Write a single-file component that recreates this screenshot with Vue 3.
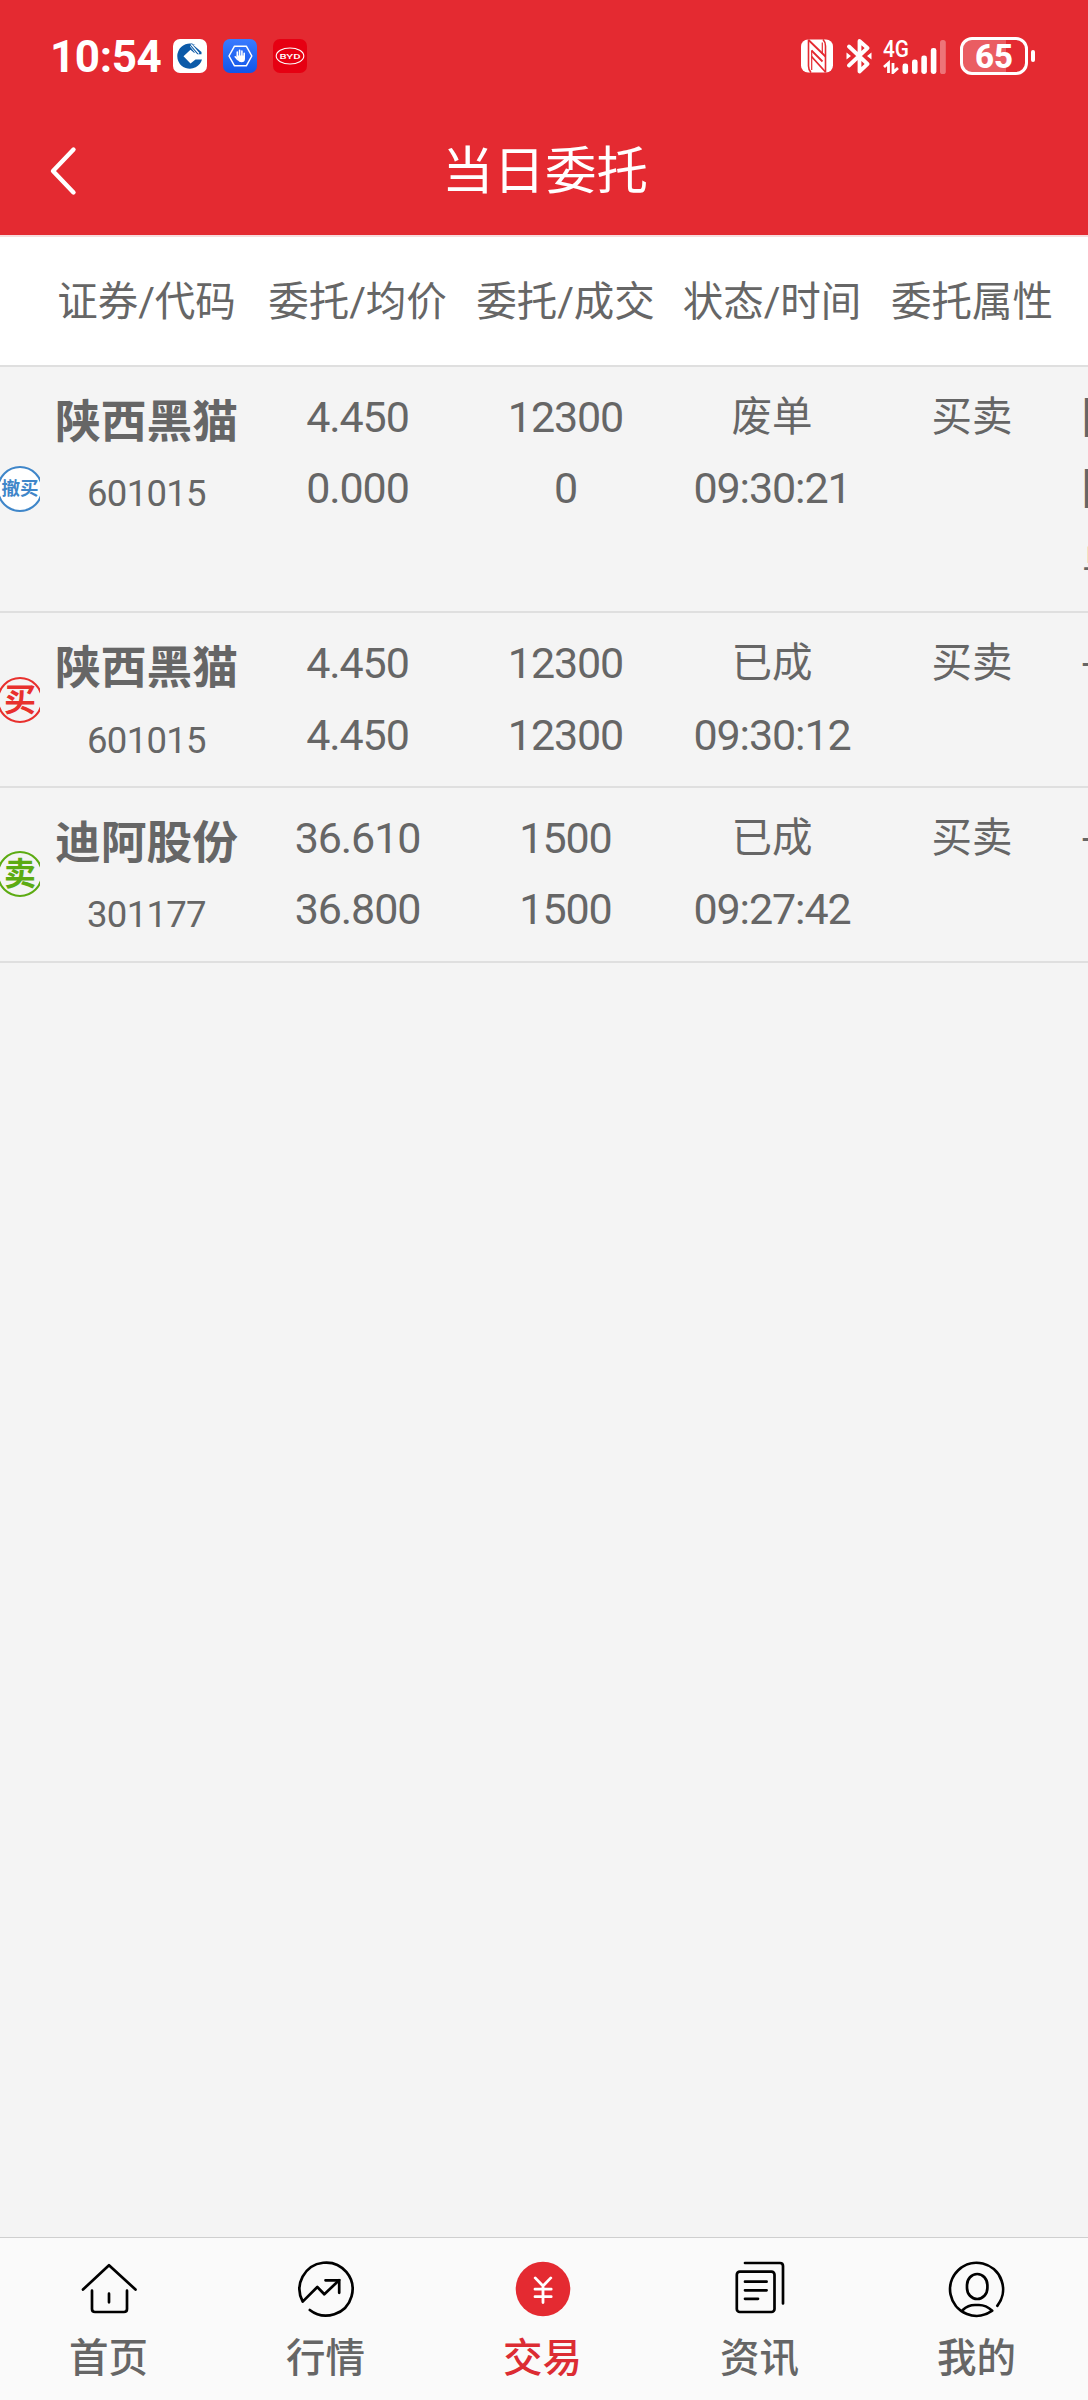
<script setup>
import { ref } from 'vue'

const columns = ['证券/代码', '委托/均价', '委托/成交', '状态/时间', '委托属性']

const orders = ref([
  {
    badge: '撤买',
    type: 'cancel',
    name: '陕西黑猫',
    code: '601015',
    price: '4.450',
    avg: '0.000',
    amount: '12300',
    dealt: '0',
    status: '废单',
    time: '09:30:21',
    attr: '买卖',
    note: ['[', '[', '单'],
  },
  {
    badge: '买',
    type: 'buy',
    name: '陕西黑猫',
    code: '601015',
    price: '4.450',
    avg: '4.450',
    amount: '12300',
    dealt: '12300',
    status: '已成',
    time: '09:30:12',
    attr: '买卖',
    note: ['--'],
  },
  {
    badge: '卖',
    type: 'sell',
    name: '迪阿股份',
    code: '301177',
    price: '36.610',
    avg: '36.800',
    amount: '1500',
    dealt: '1500',
    status: '已成',
    time: '09:27:42',
    attr: '买卖',
    note: ['--'],
  },
])

const tabs = [
  { key: 'home', label: '首页' },
  { key: 'market', label: '行情' },
  { key: 'trade', label: '交易' },
  { key: 'news', label: '资讯' },
  { key: 'mine', label: '我的' },
]
const activeTab = ref('trade')
</script>

<template>
  <div class="page">
    <header class="top">
      <div class="status-bar">
        <div class="status-left">
          <span class="clock">10:54</span>
          <svg class="app-icon" width="34" height="34" viewBox="0 0 34 34">
            <rect width="34" height="34" rx="7" fill="#fff" />
            <path d="M22.5 5.8A12.6 12.6 0 1 0 29 20.6H22.5L17.5 24.6 10.5 17.3 17.5 10.8 21 13.8H22L17 7.6V5.2z" fill="#0c5aa8" />
            <path d="M18.5 4.5L28.5 13V15.4H24.5L16.5 6z" fill="#0c5aa8" />
            <path d="M18.2 5.5L26 14.5M21 16.2H30" stroke="#fff" stroke-width="1.2" />
            <path d="M17.5 11.5l6 6-6 6-6-6z" fill="#fff" />
          </svg>
          <svg class="app-icon" width="34" height="34" viewBox="0 0 34 34">
            <defs>
              <linearGradient id="guard" x1="0" y1="0" x2="0" y2="1">
                <stop offset="0" stop-color="#3a7bff" />
                <stop offset="1" stop-color="#1155e8" />
              </linearGradient>
            </defs>
            <rect width="34" height="34" rx="7" fill="url(#guard)" />
            <path d="M11.5 7.2h11.8L28.8 17l-5.5 9.8H11.5L6 17z" fill="none" stroke="#fff" stroke-width="1.5" stroke-linejoin="round" />
            <path d="M14.3 18v-5M16.6 17v-5.6M18.9 17v-5M21.2 18v-3.8M14.6 20.5L12.2 17.8" stroke="#fff" stroke-width="1.6" stroke-linecap="round" />
            <path d="M13.6 16.5h8.4v3.2q0 3.6-3.6 3.6-2.4 0-3.6-2z" fill="#fff" />
          </svg>
          <svg class="app-icon" width="34" height="34" viewBox="0 0 34 34">
            <rect width="34" height="34" rx="7" fill="#e60012" />
            <ellipse cx="17" cy="17" rx="13.8" ry="8" fill="none" stroke="#fff" stroke-width="1.1" />
            <text x="17" y="19.8" class="logo-text" text-anchor="middle" textLength="21" lengthAdjust="spacingAndGlyphs">BYD</text>
          </svg>
        </div>

        <div class="status-right">
          <svg class="nfc" width="32" height="34" viewBox="0 0 32 34">
            <rect y="0.5" width="32" height="33" rx="7" fill="#fff" />
            <path d="M7.5 0.5V27Q7.5 31 10 33.5M24.5 33.5V7Q24.5 3 22 0.5" fill="none" stroke="#e42a31" stroke-width="1.6" />
            <path d="M7.5 1L24.5 17.5M10.5 11.5L21.5 22.5M10.5 17.5L24.5 33" fill="none" stroke="#e42a31" stroke-width="1.8" />
            <path d="M10.7 11.5V31M21.3 3.5V15" fill="none" stroke="#e42a31" stroke-width="1.2" />
          </svg>
          <svg class="bluetooth" width="26" height="36" viewBox="0 0 26 36">
            <path d="M3 8.5L21.5 26 13.5 33.5V3L21.5 10 3 27.5" fill="none" stroke="#fff" stroke-width="3.8" stroke-linejoin="round" stroke-linecap="round" />
            <path d="M0.5 14.5L5 18 0.5 21.5zM25.5 14.5L21 18 25.5 21.5z" fill="#fff" />
          </svg>
          <svg class="signal" width="64" height="36" viewBox="0 0 64 36">
            <text x="0" y="18.5" class="net-text" textLength="26" lengthAdjust="spacingAndGlyphs">4G</text>
            <path d="M1 29L5.5 25V35M10 25V34.5L15 30" fill="none" stroke="#fff" stroke-width="2.8" />
            <rect x="19.5" y="25.5" width="5.6" height="10.5" rx="2.4" fill="#fff" />
            <rect x="29" y="21.5" width="5.6" height="14.5" rx="2.4" fill="#fff" />
            <rect x="38.3" y="17.5" width="5.6" height="18.5" rx="2.4" fill="#fff" />
            <rect x="47.8" y="10" width="5.6" height="26" rx="2.4" fill="#fff" />
            <rect x="57" y="2" width="5.8" height="34" rx="2.6" fill="#fff" opacity="0.35" />
          </svg>
          <div class="battery">
            <span class="battery-text">65</span>
          </div>
          <span class="battery-cap"></span>
        </div>
      </div>

      <div class="nav-bar">
        <button class="back" aria-label="返回">
          <svg width="32" height="50" viewBox="0 0 32 50">
            <path d="M27.5 3.5L7 25 27.5 46.5" fill="none" stroke="#fff" stroke-width="4.4" stroke-linecap="round" stroke-linejoin="round" />
          </svg>
        </button>
        <h1>当日委托</h1>
      </div>
    </header>

    <main class="content">
      <div class="grid table-head">
        <span class="side"></span>
        <span v-for="col in columns" :key="col" class="cell">{{ col }}</span>
      </div>

      <div v-for="(order, i) in orders" :key="i" class="grid row">
        <div class="side">
          <span class="badge" :class="order.type">{{ order.badge }}</span>
        </div>
        <div class="cell stock">
          <strong>{{ order.name }}</strong>
          <span class="code">{{ order.code }}</span>
        </div>
        <div class="cell num">
          <span>{{ order.price }}</span>
          <span>{{ order.avg }}</span>
        </div>
        <div class="cell num">
          <span>{{ order.amount }}</span>
          <span>{{ order.dealt }}</span>
        </div>
        <div class="cell">
          <span>{{ order.status }}</span>
          <span class="num">{{ order.time }}</span>
        </div>
        <div class="cell">
          <span>{{ order.attr }}</span>
        </div>
        <div class="cell note">
          <span v-for="(line, n) in order.note" :key="n">{{ line }}</span>
        </div>
      </div>
    </main>

    <nav class="tab-bar">
      <button
        v-for="tab in tabs"
        :key="tab.key"
        class="tab"
        :class="{ active: tab.key === activeTab }"
        @click="activeTab = tab.key"
      >
        <svg class="tab-icon" width="60" height="60" viewBox="0 0 60 60">
          <template v-if="tab.key === 'home'">
            <path d="M4 30.5L30 6.2 56.5 30.5" />
            <path d="M13 31.7V50q0 3 3 3h29q3 0 3-3V31.7M30 34.7v8.6" />
          </template>
          <template v-else-if="tab.key === 'market'">
            <path d="M13.8 51A26.5 26.5 0 1 0 6.7 42.6L21.3 28 28.3 35.3 43 21.3" />
            <path d="M29.5 21.3H43.2V33.8" stroke-linejoin="miter" />
          </template>
          <template v-else-if="tab.key === 'trade'">
            <circle cx="30" cy="30" r="27.3" class="coin" />
            <path class="yen" d="M22.2 18.9L30 27 37.8 18.9M30 27V43.5M22 30.2H38.2M22 37.7H38.2" />
          </template>
          <template v-else-if="tab.key === 'news'">
            <rect x="6.8" y="12.7" width="37.7" height="40.3" rx="3" />
            <path d="M15 22.7H36.6M15 31.3H36.6M15 39.8H28" />
            <path d="M15 4H50q3 0 3 3V44.5" />
          </template>
          <template v-else>
            <path d="M50.3 46.8A26.5 26.5 0 1 0 45.2 51.7Q39 46 32 46H28Q21 46 15.8 51" />
            <rect x="20" y="15" width="20.4" height="25" rx="10.2" ry="11" />
          </template>
        </svg>
        <span class="tab-label">{{ tab.label }}</span>
      </button>
    </nav>
  </div>
</template>

<style>
body {
  background: #f4f4f4;
}
</style>

<style scoped>
.page {
  display: flex;
  flex-direction: column;
  width: 1088px;
  height: 2400px;
  overflow: hidden;
  background: #f4f4f4;
  color: #666;
  font-family: Roboto, "Noto Sans CJK SC", sans-serif;
}

.top {
  height: 235px;
  background: #e42a31;
  color: #fff;
}

.status-bar {
  display: flex;
  align-items: center;
  justify-content: space-between;
  height: 112px;
  padding: 0 53px 0 50px;
}

.status-left,
.status-right {
  display: flex;
  align-items: center;
}

.clock {
  width: 123px;
  font-size: 44px;
  font-weight: 700;
  letter-spacing: -0.4px;
  line-height: 50px;
  padding-top: 2px;
}

.app-icon {
  margin-right: 16px;
}

.logo-text {
  font-size: 8px;
  font-weight: 500;
  fill: #fff;
}

.net-text {
  font-size: 23px;
  font-weight: 500;
  fill: #fff;
}

.nfc {
  margin-right: 13px;
}

.bluetooth {
  margin-right: 11px;
}

.signal {
  margin-right: 13px;
}

.battery {
  display: flex;
  align-items: center;
  justify-content: center;
  box-sizing: border-box;
  width: 68px;
  height: 38px;
  border: 3px solid #fff;
  border-radius: 12px;
  background: linear-gradient(to right, rgba(255, 255, 255, 0.24) 70%, transparent 70%);
}

.battery-text {
  font-size: 33px;
  font-weight: 800;
  line-height: 34px;
  padding-top: 1px;
}

.battery-cap {
  width: 4px;
  height: 12px;
  margin-left: 3px;
  border-radius: 3px;
  background: #fff;
}

.nav-bar {
  display: grid;
  grid-template-columns: 120px 1fr 118px;
  align-items: center;
  height: 118px;
}

.back {
  display: flex;
  padding: 0 0 0 46px;
  border: none;
  background: none;
}

.nav-bar h1 {
  margin: 0;
  padding-top: 2px;
  font-size: 51.5px;
  font-weight: 400;
  line-height: 60px;
  text-align: center;
}

.content {
  flex: 1;
}

.grid {
  display: grid;
  grid-template-columns: 40px 213px 209px 207px 206px 194px 19px;
}

.table-head {
  height: 132px;
  box-sizing: border-box;
  align-items: center;
  padding-top: 3px;
  border-top: 2px solid #f6dcde;
  border-bottom: 2px solid #dfdfdf;
  background: #fff;
}

.cell {
  display: flex;
  flex-direction: column;
  align-items: center;
  font-size: 40.5px;
  line-height: 71.4px;
  white-space: nowrap;
}

.row {
  padding: 15px 0;
  border-bottom: 2px solid #dfdfdf;
}

.num {
  font-size: 43px;
  letter-spacing: -1.1px;
}

.stock {
  padding-top: 5px;
  margin-bottom: -7px;
}

.stock strong {
  font-size: 45.8px;
  font-weight: 700;
}

.code {
  font-size: 36.5px;
  letter-spacing: -0.7px;
  line-height: 72px;
}

.side {
  display: flex;
  align-items: center;
  justify-content: center;
  overflow: hidden;
}

.badge {
  flex-shrink: 0;
  display: flex;
  align-items: center;
  justify-content: center;
  box-sizing: border-box;
  width: 46px;
  height: 46px;
  border: 2px solid currentColor;
  border-radius: 50%;
  font-size: 32px;
  font-weight: 700;
  line-height: 1;
}

.badge.cancel {
  background: #fff;
  color: #3f86c9;
  font-size: 18.5px;
  font-weight: 700;
}

.badge.buy {
  color: #e8302d;
}

.badge.sell {
  color: #5cab12;
}

.note {
  align-items: flex-start;
  padding-left: 13px;
  overflow: hidden;
}

.tab-bar {
  display: flex;
  height: 163px;
  padding-right: 3px;
  box-sizing: border-box;
  border-top: 1px solid #cfcfcf;
  background: #fafafa;
}

.tab {
  flex: 1;
  display: flex;
  flex-direction: column;
  align-items: center;
  padding: 21px 0 0;
  border: none;
  background: none;
  color: #666;
  font-family: inherit;
}

.tab-icon {
  fill: none;
  stroke: #000;
  stroke-width: 2.7;
  stroke-linecap: round;
  stroke-linejoin: round;
}

.tab-icon .coin {
  fill: #e42a31;
  stroke: none;
}

.tab-icon .yen {
  stroke: #fff;
  stroke-width: 2.8;
}

.tab-label {
  margin-top: 10px;
  font-size: 39.5px;
  font-weight: 500;
  line-height: 60px;
}

.tab.active .tab-label {
  color: #dc2c33;
}
</style>
